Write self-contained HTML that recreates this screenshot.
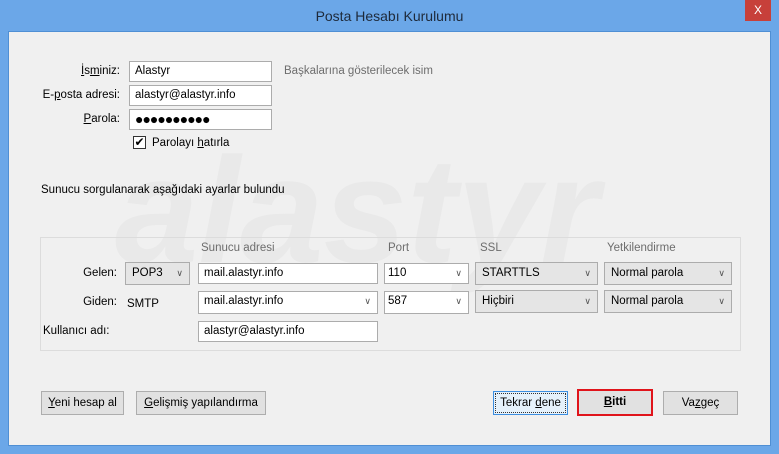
<!DOCTYPE html>
<html><head><meta charset="utf-8"><style>
*{box-sizing:border-box;margin:0;padding:0}
body{width:779px;height:454px;background:#6ba7e8;font-family:"Liberation Sans",sans-serif;font-size:11.5px;color:#000;position:relative;overflow:hidden}
.a{position:absolute}
.title{left:0;top:0;width:779px;height:31px;text-align:center;line-height:32px;font-size:14px;color:#1e2a3a}
.close{left:745px;top:0;width:26px;height:21px;background:#c7403a;color:#fff;text-align:center;line-height:20px;font-size:12px}
.content{left:8px;top:31px;width:763px;height:415px;background:#f0f0f0;border:1px solid #4f8fd4}
.lbl{text-align:right;line-height:20px}
.inp{background:#fff;border:1px solid #acacac;height:21px;line-height:19px;padding-left:5px}
.sel{background:#e5e5e5;border:1px solid #acacac;height:23px;line-height:21px;padding-left:6px}
.dd{position:absolute;right:6px;top:0;font-size:9px;color:#555}
.btn{background:#e1e1e1;border:1px solid #adadad;height:24px;line-height:22px;text-align:center}
.gray{color:#6d6d6d}
u{text-decoration:underline}
</style></head><body>
<div class="a title">Posta Hesabı Kurulumu</div>
<div class="a close">X</div>
<div class="a content"></div>
<div class="a" style="left:115px;top:135px;font-size:150px;font-weight:bold;font-style:italic;color:#e9e9e9;letter-spacing:0px;line-height:150px">alastyr</div>

<div class="a lbl" style="left:30px;top:61px;width:90px"><u>İ</u>s<u>m</u>iniz:</div>
<div class="a inp" style="left:129px;top:61px;width:143px">Alastyr</div>
<div class="a gray" style="left:284px;top:61px;line-height:20px">Başkalarına gösterilecek isim</div>
<div class="a lbl" style="left:20px;top:85px;width:100px">E-<u>p</u>osta adresi:</div>
<div class="a inp" style="left:129px;top:85px;width:143px">alastyr@alastyr.info</div>
<div class="a lbl" style="left:30px;top:109px;width:90px"><u>P</u>arola:</div>
<div class="a inp" style="left:129px;top:109px;width:143px;font-size:14px;letter-spacing:-1px">●●●●●●●●●●</div>
<div class="a" style="left:133px;top:136px;width:13px;height:13px;border:1px solid #333;background:#fff;font-size:12px;line-height:11px;text-align:center">✔</div>
<div class="a" style="left:152px;top:133px;line-height:20px">Parolayı <u>h</u>atırla</div>

<div class="a" style="left:41px;top:180px;line-height:20px">Sunucu sorgulanarak aşağıdaki ayarlar bulundu</div>

<div class="a" style="left:40px;top:237px;width:701px;height:114px;border:1px solid #dcdcdc"></div>
<div class="a gray" style="left:201px;top:242px">Sunucu adresi</div>
<div class="a gray" style="left:388px;top:242px">Port</div>
<div class="a gray" style="left:480px;top:242px">SSL</div>
<div class="a gray" style="left:607px;top:242px">Yetkilendirme</div>

<div class="a lbl" style="left:40px;top:263px;width:77px">Gelen:</div>
<div class="a sel" style="left:125px;top:262px;width:65px">POP3<span class="dd">∨</span></div>
<div class="a inp" style="left:198px;top:263px;width:180px">mail.alastyr.info</div>
<div class="a inp" style="left:384px;top:263px;width:85px;padding-left:3px">110<span class="dd">∨</span></div>
<div class="a sel" style="left:475px;top:262px;width:123px">STARTTLS<span class="dd">∨</span></div>
<div class="a sel" style="left:604px;top:262px;width:128px">Normal parola<span class="dd">∨</span></div>

<div class="a lbl" style="left:40px;top:292px;width:77px">Giden:</div>
<div class="a" style="left:127px;top:294px;line-height:20px">SMTP</div>
<div class="a inp" style="left:198px;top:291px;width:180px;height:23px">mail.alastyr.info<span class="dd">∨</span></div>
<div class="a inp" style="left:384px;top:291px;width:85px;height:23px;padding-left:3px">587<span class="dd">∨</span></div>
<div class="a sel" style="left:475px;top:290px;width:123px">Hiçbiri<span class="dd">∨</span></div>
<div class="a sel" style="left:604px;top:290px;width:128px">Normal parola<span class="dd">∨</span></div>

<div class="a" style="left:43px;top:321px;line-height:20px">Kullanıcı adı:</div>
<div class="a inp" style="left:198px;top:321px;width:180px">alastyr@alastyr.info</div>

<div class="a btn" style="left:41px;top:391px;width:83px"><u>Y</u>eni hesap al</div>
<div class="a btn" style="left:136px;top:391px;width:130px"><u>G</u>elişmiş yapılandırma</div>
<div class="a btn" style="left:493px;top:391px;width:75px;border:1px solid #3c8ee0;outline:1px dotted #333;outline-offset:-3px;background:#e5f1fb">Tekrar <u>d</u>ene</div>
<div class="a btn" style="left:577px;top:389px;width:76px;height:27px;border:2px solid #e0141b;line-height:23px;font-weight:bold"><u>B</u>itti</div>
<div class="a btn" style="left:663px;top:391px;width:75px">Va<u>z</u>geç</div>
</body></html>
